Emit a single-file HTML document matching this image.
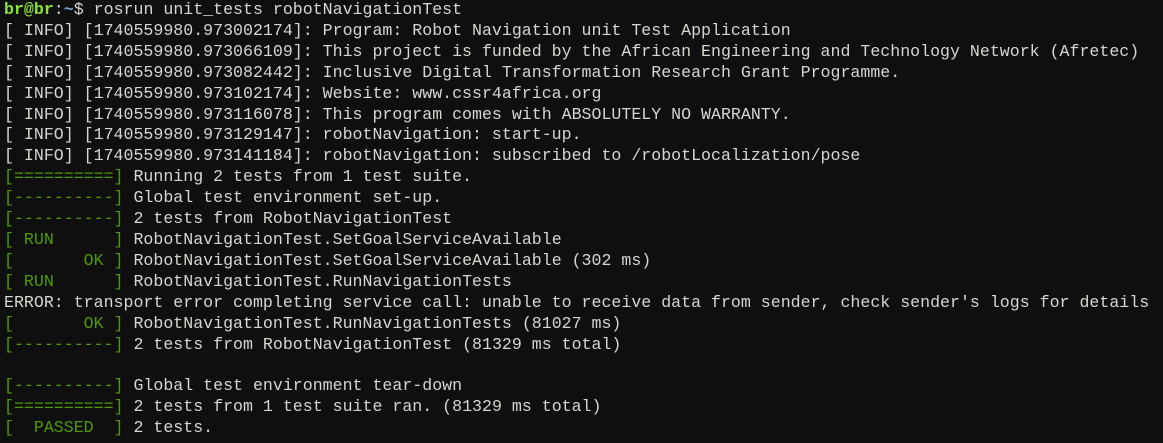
<!DOCTYPE html>
<html><head><meta charset="utf-8"><style>
html,body{margin:0;padding:0;background:#0f0f0f;width:1163px;height:443px;overflow:hidden}
pre{margin:0;padding:0 0 0 4px;font-family:"Liberation Mono",monospace;font-size:16.6px;line-height:20.9px;color:#d3d7cf;white-space:pre}
.g{color:#4e9a06}.p{color:#8ae234;font-weight:bold}.b{color:#729fcf;font-weight:bold}
</style></head><body><pre><span class="p">br@br</span>:<span class="b">~</span>$ rosrun unit_tests robotNavigationTest
[ INFO] [1740559980.973002174]: Program: Robot Navigation unit Test Application
[ INFO] [1740559980.973066109]: This project is funded by the African Engineering and Technology Network (Afretec)
[ INFO] [1740559980.973082442]: Inclusive Digital Transformation Research Grant Programme.
[ INFO] [1740559980.973102174]: Website: www.cssr4africa.org
[ INFO] [1740559980.973116078]: This program comes with ABSOLUTELY NO WARRANTY.
[ INFO] [1740559980.973129147]: robotNavigation: start-up.
[ INFO] [1740559980.973141184]: robotNavigation: subscribed to /robotLocalization/pose
<span class="g">[==========]</span> Running 2 tests from 1 test suite.
<span class="g">[----------]</span> Global test environment set-up.
<span class="g">[----------]</span> 2 tests from RobotNavigationTest
<span class="g">[ RUN      ]</span> RobotNavigationTest.SetGoalServiceAvailable
<span class="g">[       OK ]</span> RobotNavigationTest.SetGoalServiceAvailable (302 ms)
<span class="g">[ RUN      ]</span> RobotNavigationTest.RunNavigationTests
ERROR: transport error completing service call: unable to receive data from sender, check sender's logs for details
<span class="g">[       OK ]</span> RobotNavigationTest.RunNavigationTests (81027 ms)
<span class="g">[----------]</span> 2 tests from RobotNavigationTest (81329 ms total)

<span class="g">[----------]</span> Global test environment tear-down
<span class="g">[==========]</span> 2 tests from 1 test suite ran. (81329 ms total)
<span class="g">[  PASSED  ]</span> 2 tests.
</pre></body></html>
